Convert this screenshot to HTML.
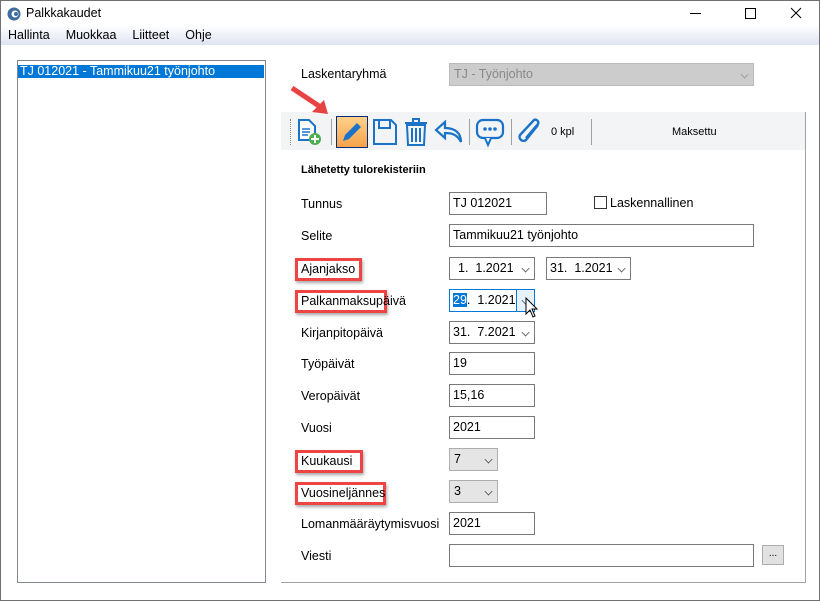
<!DOCTYPE html>
<html><head><meta charset="utf-8"><style>
*{margin:0;padding:0;box-sizing:border-box}
body{width:820px;height:601px;background:#fff;font-family:"Liberation Sans",Arial,sans-serif;font-size:12.5px;color:#000;position:relative;overflow:hidden}
.a{position:absolute}
.win{left:0;top:0;width:820px;height:601px;border:1px solid #707070}
.menu{left:1px;top:25px;width:818px;height:20px;background:linear-gradient(#fff,#dfe4f3)}
.menu span{margin-left:7px;margin-right:9px;font-size:12.5px;line-height:20px}
.inp{border:1px solid #7a7a7a;background:#fff;height:23px;line-height:21px;padding-left:3px;font-size:12.5px}
.lbl{left:301px;font-size:12.5px}
.red{border:3px solid #ef4444;box-shadow:1px 2px 3px rgba(0,0,0,.35)}
.dd{border:1px solid #adadad;background:#e5e5e5;height:23px;line-height:21px;padding-left:4px}
.chev{position:absolute;right:5px;top:7px;width:7px;height:7px;border-right:1px solid #555;border-bottom:1px solid #555;transform:rotate(45deg) scale(.8)}
.sep{position:absolute;top:119px;width:1px;height:26px;background:#a0a0a0}
</style></head><body>
<div class="a win"></div>
<svg class="a" style="left:7px;top:7px" width="14" height="14"><circle cx="7" cy="7" r="6.5" fill="#3f6e9e"/><circle cx="8" cy="7" r="3.5" fill="#fff"/><circle cx="9" cy="7" r="2" fill="#3f6e9e"/></svg>
<div class="a" style="left:26px;top:6px;font-size:12.5px">Palkkakaudet</div>
<div class="a" style="left:690px;top:13px;width:11px;height:1px;background:#000"></div>
<div class="a" style="left:745px;top:8px;width:11px;height:11px;border:1px solid #000"></div>
<svg class="a" style="left:790px;top:7px" width="12" height="12"><path d="M1 1L11 11M11 1L1 11" stroke="#000" stroke-width="1"/></svg>
<div class="a menu"><span>Hallinta</span><span>Muokkaa</span><span>Liitteet</span><span>Ohje</span></div>

<div class="a" style="left:17px;top:60px;width:249px;height:523px;border:1px solid #828790"></div>
<div class="a" style="left:18px;top:65px;width:246px;height:13px;background:#0078d7;color:#fff;line-height:13px;padding-left:2px">TJ 012021 - Tammikuu21 työnjohto</div>

<div class="a" style="left:301px;top:67px">Laskentaryhmä</div>
<div class="a" style="left:449px;top:63px;width:305px;height:23px;background:#ccc;border:1px solid #bbb;color:#888;line-height:21px;padding-left:4px">TJ - Työnjohto<span class="chev" style="border-color:#999"></span></div>

<div class="a" style="left:281px;top:112px;width:525px;height:471px;border-right:1px solid #a0a0a0;border-bottom:1px solid #a0a0a0"></div>
<div class="a" style="left:281px;top:112px;width:524px;height:38px;background:#f3f4f6"></div>
<div class="a" style="left:290px;top:119px;width:1px;height:26px;border-left:1px dotted #888"></div>
<svg class="a" style="left:297px;top:118px" width="26" height="28"><path d="M2 2h10l6 6v14H2z" fill="#fff" stroke="#1a73c8" stroke-width="2"/><path d="M5 11h8M5 14h8M5 17h6" stroke="#1a73c8" stroke-width="1.5"/><circle cx="18" cy="21" r="6" fill="#4caf50"/><path d="M18 17v8M14 21h8" stroke="#fff" stroke-width="2"/></svg>
<div class="sep" style="left:331px"></div>
<div class="a" style="left:336px;top:116px;width:32px;height:32px;border:1px solid #002c80;background:linear-gradient(#ffd18a,#f7a24a)"></div>
<svg class="a" style="left:340px;top:120px" width="24" height="24"><path d="M3 21l2-6 12-12 4 4-12 12z" fill="#1a73c8"/></svg>
<svg class="a" style="left:372px;top:118px" width="26" height="28"><path d="M2 2h17l5 5v19H2z" fill="none" stroke="#1a73c8" stroke-width="2"/><path d="M7 2v8h11V2" fill="none" stroke="#1a73c8" stroke-width="2"/></svg>
<svg class="a" style="left:403px;top:117px" width="26" height="30"><path d="M2 6h22M10 6V2h6v4" stroke="#1a73c8" stroke-width="2" fill="none"/><path d="M4 8h18l-1 20H5z" fill="none" stroke="#1a73c8" stroke-width="2"/><path d="M9 11v14M13 11v14M17 11v14" stroke="#1a73c8" stroke-width="2"/></svg>
<svg class="a" style="left:434px;top:120px" width="30" height="24"><path d="M11 2L2 10l9 8v-5c6 0 12 1 16 9 0-9-6-14-16-14z" fill="none" stroke="#1a73c8" stroke-width="2.2"/></svg>
<div class="sep" style="left:469px"></div>
<svg class="a" style="left:475px;top:118px" width="30" height="30"><rect x="2" y="2" width="26" height="18" rx="6" fill="none" stroke="#1a73c8" stroke-width="2.2"/><path d="M10 20l3 7 3-7" fill="#fff" stroke="#1a73c8" stroke-width="2"/><circle cx="10" cy="11" r="1.8" fill="#1a73c8"/><circle cx="15" cy="11" r="1.8" fill="#1a73c8"/><circle cx="20" cy="11" r="1.8" fill="#1a73c8"/></svg>
<div class="sep" style="left:511px"></div>
<svg class="a" style="left:516px;top:117px" width="28" height="30"><path d="M22 8L10 23a4 4 0 0 1-6-5L18 3a3 3 0 0 1 4 4L10 21" fill="none" stroke="#1a73c8" stroke-width="2.4"/></svg>
<div class="a" style="left:551px;top:126px;font-size:11px">0 kpl</div>
<div class="sep" style="left:591px"></div>
<div class="a" style="left:672px;top:126px;font-size:11px">Maksettu</div>
<svg class="a" style="left:288px;top:84px" width="45" height="35"><path d="M4 4L34 24" stroke="#e84343" stroke-width="5"/><path d="M40 30L24 28L36 16z" fill="#e84343"/></svg>

<div class="a" style="left:301px;top:164px;font-weight:bold;font-size:11px">Lähetetty tulorekisteriin</div>

<div class="a lbl" style="top:197px">Tunnus</div>
<div class="a inp" style="left:449px;top:192px;width:98px">TJ 012021</div>
<div class="a" style="left:594px;top:196px;width:13px;height:13px;border:1px solid #333"></div>
<div class="a" style="left:610px;top:196px">Laskennallinen</div>

<div class="a lbl" style="top:229px">Selite</div>
<div class="a inp" style="left:449px;top:224px;width:305px">Tammikuu21 työnjohto</div>

<div class="a red" style="left:295px;top:258px;width:67px;height:23px"></div>
<div class="a lbl" style="top:262px">Ajanjakso</div>
<div class="a inp" style="left:449px;top:257px;width:86px;padding-left:8px">1.&nbsp; 1.2021<span class="chev"></span></div>
<div class="a inp" style="left:546px;top:257px;width:85px">31.&nbsp; 1.2021<span class="chev"></span></div>

<div class="a red" style="left:295px;top:290px;width:92px;height:23px"></div>
<div class="a lbl" style="top:294px">Palkanmaksupäivä</div>
<div class="a inp" style="left:449px;top:289px;width:86px;border-color:#0078d7"><span style="background:#0078d7;color:#fff">29</span>.&nbsp; 1.2021<span style="position:absolute;right:0;top:0;width:18px;height:21px;background:#e5f1fb;border-left:1px solid #0078d7"></span><span class="chev"></span></div>
<svg class="a" style="left:525px;top:297px" width="14" height="22"><path d="M1 1v16l4-4 3 7 2-1-3-7h5z" fill="#fff" stroke="#000"/></svg>

<div class="a lbl" style="top:326px">Kirjanpitopäivä</div>
<div class="a inp" style="left:449px;top:321px;width:86px">31.&nbsp; 7.2021<span class="chev"></span></div>

<div class="a lbl" style="top:357px">Työpäivät</div>
<div class="a inp" style="left:449px;top:352px;width:86px">19</div>
<div class="a lbl" style="top:389px">Veropäivät</div>
<div class="a inp" style="left:449px;top:384px;width:86px">15,16</div>
<div class="a lbl" style="top:421px">Vuosi</div>
<div class="a inp" style="left:449px;top:416px;width:86px">2021</div>

<div class="a red" style="left:295px;top:450px;width:68px;height:23px"></div>
<div class="a lbl" style="top:454px">Kuukausi</div>
<div class="a dd" style="left:449px;top:448px;width:49px">7<span class="chev"></span></div>

<div class="a red" style="left:295px;top:482px;width:91px;height:23px"></div>
<div class="a lbl" style="top:486px">Vuosineljännes</div>
<div class="a dd" style="left:449px;top:480px;width:49px">3<span class="chev"></span></div>

<div class="a lbl" style="top:517px">Lomanmääräytymisvuosi</div>
<div class="a inp" style="left:449px;top:512px;width:86px">2021</div>

<div class="a lbl" style="top:549px">Viesti</div>
<div class="a inp" style="left:449px;top:544px;width:305px"></div>
<div class="a" style="left:762px;top:545px;width:22px;height:20px;background:#e1e1e1;border:1px solid #adadad;text-align:center;font-size:10px;line-height:16px">...</div>
</body></html>
